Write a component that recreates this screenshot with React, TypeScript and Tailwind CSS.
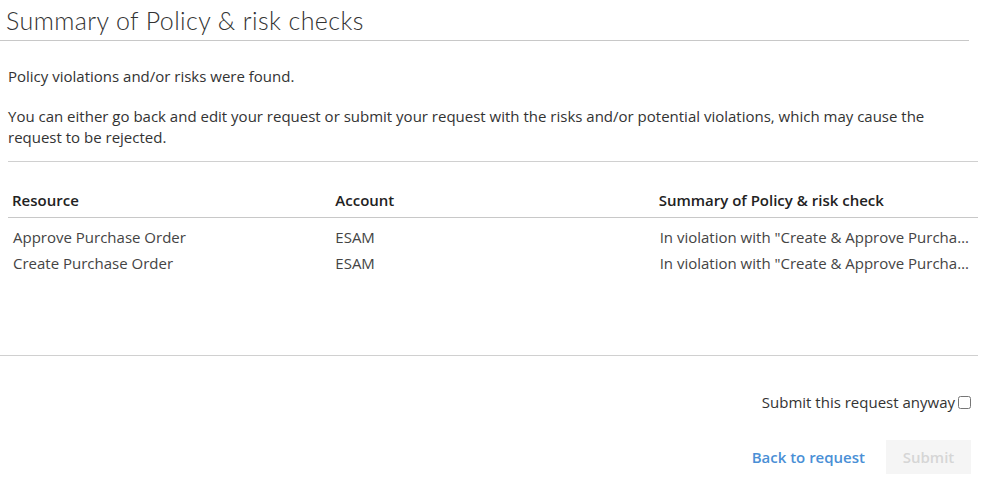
const rows = [
  { resource: 'Approve Purchase Order', account: 'ESAM', summary: 'In violation with "Create & Approve Purchase Order" policy' },
  { resource: 'Create Purchase Order', account: 'ESAM', summary: 'In violation with "Create & Approve Purchase Order" policy' },
];

export default function App() {
  return (
    <div className="w-[989px] h-[480px] bg-white text-[#333] font-['Open_Sans',sans-serif] text-[15px]">
      <div className="w-[969px] border-b border-[#c8c8c8] pl-[6px] pt-[6px] pb-[5px]">
        <h1 className="text-[25px] leading-[29px] font-light font-['Lato',sans-serif] text-[#333] tracking-[0.4px]">
          Summary of Policy &amp; risk checks
        </h1>
      </div>

      <div className="ml-[8px] w-[970px]">
        <div className="border-b border-[#d0d0d0] pt-[25px] pb-[13px] leading-[21px]">
          <p>Policy violations and/or risks were found.</p>
          <p className="mt-[19px] pr-[40px]">
            You can either go back and edit your request or submit your request with the risks and/or potential violations, which may cause the request to be rejected.
          </p>
        </div>

        <table className="w-full table-fixed mt-[28px] border-collapse">
          <thead>
            <tr className="border-b border-[#c8c8c8]">
              <th className="text-left font-semibold text-[#222] px-[4px] pb-[7px] leading-[20px]">Resource</th>
              <th className="text-left font-semibold text-[#222] px-[4px] pb-[7px] leading-[20px]">Account</th>
              <th className="text-left font-semibold text-[#222] px-[4px] pb-[7px] leading-[20px]">Summary of Policy &amp; risk check</th>
            </tr>
          </thead>
          <tbody>
            {rows.map((r, i) => (
              <tr key={i}>
                <td className={`px-[5px] leading-[20px] ${i === 0 ? 'pt-[9px] pb-[3px]' : 'pt-[3px]'} text-[#444]`}>{r.resource}</td>
                <td className={`px-[4px] leading-[20px] ${i === 0 ? 'pt-[9px] pb-[3px]' : 'pt-[3px]'} text-[#444]`}>{r.account}</td>
                <td className={`px-[5px] leading-[20px] ${i === 0 ? 'pt-[9px] pb-[3px]' : 'pt-[3px]'} text-[#444] truncate`}>{r.summary}</td>
              </tr>
            ))}
          </tbody>
        </table>
      </div>

      <div className="w-[978px] border-b border-[#d0d0d0] mt-[82px]" />

      <div className="w-[978px] flex justify-end items-center mt-[36px] pr-[7px]">
        <label className="flex items-center gap-[3px] leading-[20px] text-[#333]">
          Submit this request anyway
          <input type="checkbox" className="w-[13px] h-[13px] m-0" />
        </label>
      </div>

      <div className="w-[978px] flex justify-end items-center mt-[28px] pr-[7px]">
        <button className="text-[#4a8fd6] font-semibold text-[15px] leading-[20px] mr-[21px]">Back to request</button>
        <button className="w-[85px] h-[34px] bg-[#f5f5f5] text-[#d6d6d6] font-semibold text-[15px]">Submit</button>
      </div>
    </div>
  );
}
